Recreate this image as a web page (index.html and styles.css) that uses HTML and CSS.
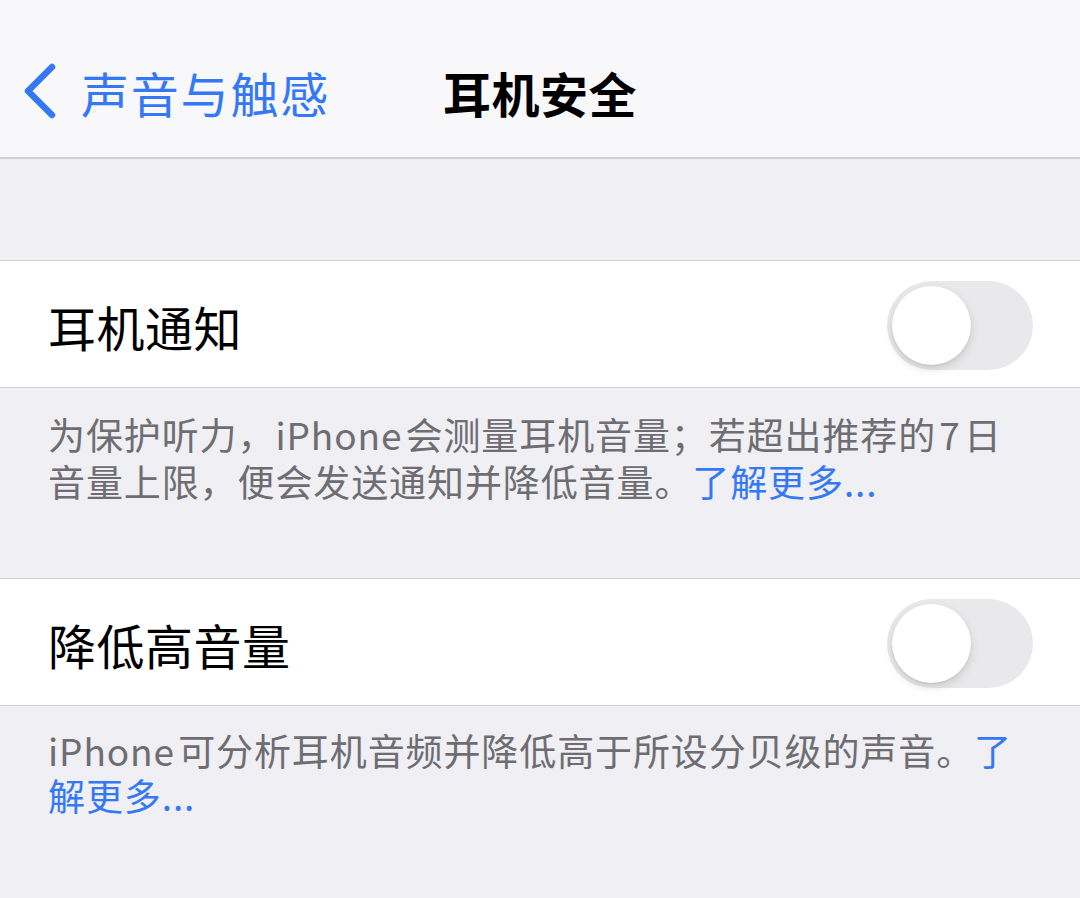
FILE: index.html
```html
<!DOCTYPE html>
<html lang="zh-CN">
<head>
<meta charset="utf-8">
<title>耳机安全</title>
<link rel="stylesheet" href="styles.css">
</head>
<body>
<div class="screen">
  <header class="nav">
    <a class="back">
      <svg class="chev" width="40" height="60" viewBox="0 0 40 60"><path d="M30 4 L6 28 L30 52" fill="none" stroke="#3478f6" stroke-width="6.5" stroke-linecap="round" stroke-linejoin="round"/></svg>
      <span class="back-label">声音与触感</span>
    </a>
    <h1 class="nav-title">耳机安全</h1>
  </header>

  <div class="spacer"></div>

  <section class="group">
    <div class="row">
      <span class="row-title">耳机通知</span>
      <span class="toggle"><span class="knob"></span></span>
    </div>
  </section>
  <p class="footer">为保护听力，iPhone 会测量耳机音量；若超出推荐的 7 日<br>音量上限，便会发送通知并降低音量。<a class="link">了解更多...</a></p>

  <section class="group group-2">
    <div class="row">
      <span class="row-title">降低高音量</span>
      <span class="toggle"><span class="knob"></span></span>
    </div>
  </section>
  <p class="footer footer-2">iPhone 可分析耳机音频并降低高于所设分贝级的声音。<a class="link">了</a><br><a class="link">解更多...</a></p>
</div>
</body>
</html>
```

FILE: styles.css
```css
* { box-sizing: border-box; }
html, body {
  margin: 0;
  padding: 0;
  background: #efeff4;
}
body {
  font-family: "Noto Sans CJK SC", "Noto Sans", sans-serif;
  width: 1080px;
  height: 898px;
  overflow: hidden;
}
.screen {
  display: flex;
  flex-direction: column;
}
.nav {
  position: relative;
  height: 159px;
  padding-top: 26px;
  background: #f8f8fa;
  border-bottom: 2px solid #cfcfd3;
  display: flex;
  align-items: center;
  justify-content: center;
}
.back {
  position: absolute;
  left: 22px;
  top: 26px;
  bottom: 0;
  display: flex;
  align-items: center;
  gap: 19px;
  color: #3478f6;
}
.chev {
  display: block;
  margin-top: 2px;
}
.back-label {
  font-size: 48px;
  letter-spacing: 1.8px;
}
.nav-title {
  margin: 0;
  font-size: 48px;
  font-weight: 600;
  color: #000;
  letter-spacing: 0.5px;
}
.spacer {
  height: 101px;
}
.group {
  background: #fff;
  border-top: 1.5px solid #cfcfd3;
  border-bottom: 1.5px solid #cfcfd3;
}
.row {
  height: 126px;
  display: flex;
  align-items: center;
  justify-content: space-between;
  padding: 0 47px 0 48px;
}
.row-title {
  font-size: 48px;
  color: #000;
  letter-spacing: 0.5px;
  margin-top: 4px;
}
.toggle {
  width: 146px;
  height: 89px;
  border-radius: 45px;
  background: #e9e9eb;
  display: flex;
  align-items: center;
  padding-left: 5px;
  margin-top: 3px;
}
.knob {
  width: 79px;
  height: 79px;
  border-radius: 50%;
  background: #fff;
  box-shadow: 0 4px 10px rgba(0,0,0,0.13), 0 1px 2px rgba(0,0,0,0.08);
}
.footer {
  margin: 0;
  padding: 23px 20px 0 48px;
  height: 190px;
  font-size: 37px;
  line-height: 47px;
  color: #6d6d72;
  letter-spacing: 0.9px;
  word-spacing: -6px;
  white-space: nowrap;
}
.footer-2 {
  height: auto;
  padding-top: 22px;
  line-height: 45px;
}
.link {
  color: #3478f6;
}
```
